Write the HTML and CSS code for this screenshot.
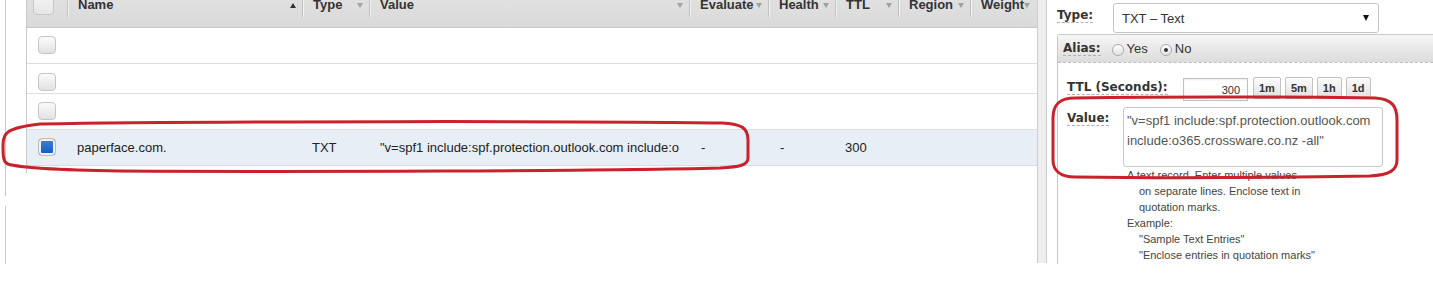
FILE: index.html
```html
<!DOCTYPE html>
<html lang="en">
  <head>
    <meta charset="UTF-8" />
    <title>Record Sets</title>
    <link rel="stylesheet" href="styles.css">
  </head>
  <body>
    <div class="page">
      <div class="gutter"><div class="gutter-line"></div></div>

      <div class="grid">
        <div class="grid-head">
          <div class="hcell hcell-check"><span class="cb cb-head"></span></div>
          <div class="hcell"><span class="label">Name</span><span class="sort-up"></span></div>
          <div class="hcell"><span class="label">Type</span><span class="sort-down"></span></div>
          <div class="hcell"><span class="label">Value</span><span class="sort-down"></span></div>
          <div class="hcell"><span class="label">Evaluate</span><span class="sort-down"></span></div>
          <div class="hcell"><span class="label">Health</span><span class="sort-down"></span></div>
          <div class="hcell"><span class="label">TTL</span><span class="sort-down"></span></div>
          <div class="hcell"><span class="label">Region</span><span class="sort-down"></span></div>
          <div class="hcell"><span class="label">Weight</span><span class="sort-down"></span></div>
        </div>

        <div class="row">
          <div class="cell c-check"><span class="cb"></span></div>
        </div>
        <div class="row short">
          <div class="cell c-check"><span class="cb"></span></div>
        </div>
        <div class="row">
          <div class="cell c-check"><span class="cb"></span></div>
        </div>
        <div class="row sel">
          <div class="cell c-check"><span class="cb on"></span></div>
          <div class="cell">paperface.com.</div>
          <div class="cell">TXT</div>
          <div class="cell c-value" title='"v=spf1 include:spf.protection.outlook.com include:o365.crossware.co.nz -all"'>"v=spf1 include:spf.protection.outlook.com include:o</div>
          <div class="cell c-dash">-</div>
          <div class="cell c-dash">-</div>
          <div class="cell">300</div>
          <div class="cell"></div>
          <div class="cell"></div>
        </div>
      </div>

      <div class="vscroll"></div>

      <div class="editor">
        <div class="type-row">
          <div class="lbl-col"><span class="lbl">Type:</span></div>
          <div class="select"><span>TXT &ndash; Text</span><span class="caret"></span></div>
        </div>

        <div class="rec-box">
          <div class="alias">
            <span class="lbl">Alias:</span>
            <span class="radio"></span><span>Yes</span>
            <span class="radio on"></span><span>No</span>
          </div>

          <div class="rec-body">
            <div class="ttl-row">
              <div class="lbl-col ttl-col"><span class="lbl">TTL (Seconds):</span></div>
              <div class="ttl-input">300</div>
              <button class="qbtn">1m</button>
              <button class="qbtn">5m</button>
              <button class="qbtn">1h</button>
              <button class="qbtn">1d</button>
            </div>

            <div class="value-row">
              <div class="lbl-col"><span class="lbl">Value:</span></div>
              <div class="txt">"v=spf1 include:spf.protection.outlook.com<br>include:o365.crossware.co.nz -all"</div>
            </div>

            <div class="hint">
              <p class="hang">A text record. Enter multiple values<br>on separate lines. Enclose text in<br>quotation marks.</p>
              <p>Example:</p>
              <p class="ex">"Sample Text Entries"<br>"Enclose entries in quotation marks"</p>
            </div>
          </div>
        </div>
      </div>

      <!-- hand drawn highlight rings -->
      <svg class="marks" width="1433" height="292" viewBox="0 0 1433 292">
        <path d="M 40 124 C 200 121, 600 121, 722 123 C 742 124, 748 128, 748 140 L 748 158 C 748 165, 740 167, 720 168 C 600 171, 300 172, 120 171 C 60 170, 20 168, 8 164 C 3 162, 3 156, 3 145 C 3 133, 6 128, 40 124 Z" />
        <path d="M 1075 98 C 1200 96, 1300 97, 1375 98 C 1392 99, 1397 106, 1397 120 L 1397 160 C 1397 170, 1390 175, 1370 176 C 1250 178, 1150 178, 1075 177 C 1060 177, 1053 170, 1053 160 L 1053 118 C 1053 104, 1060 98, 1075 98 Z" />
      </svg>
    </div>
  </body>
</html>
```

FILE: styles.css
```css
body {
  margin: 0;
  font-family: "Liberation Sans", Arial, sans-serif;
  color: #222;
  background: #fff;
}
.page {
  position: relative;
  display: flex;
  height: 264px;
  overflow: hidden;
}

/* left gutter */
.gutter {
  width: 26px;
  flex: none;
}
.gutter-line {
  margin-left: 5px;
  width: 1px;
  height: 264px;
  background: linear-gradient(#c8c8c8 0 196px, transparent 196px 206px, #c8c8c8 206px);
}

/* record grid */
.grid {
  width: 1010px;
  height: 173px;
  flex: none;
  border-left: 1px solid #c9c9c9;
}
.grid-head,
.row {
  display: grid;
  grid-template-columns: 41px 235px 67px 320px 79px 67px 63px 72px 66px;
}
.grid-head {
  height: 27px;
  background: linear-gradient(#e0e0e0, #dadada);
  border-bottom: 1px solid #c8c8c8;
}
.hcell {
  position: relative;
  display: flex;
  align-items: flex-start;
  padding: 0 7px 0 10px;
  font-size: 13px;
  font-weight: bold;
  line-height: 15px;
  color: #333;
}
.hcell::after {
  content: "";
  position: absolute;
  right: 0;
  top: 0;
  width: 1px;
  height: 17px;
  background: #c2c2c2;
  box-shadow: 1px 0 0 #f3f3f3;
}
.hcell:last-child::after {
  display: none;
}
.hcell-check {
  padding: 0;
}
.hcell .label {
  margin-top: -3px;
  white-space: nowrap;
}
.sort-up,
.sort-down {
  flex: none;
  margin: 3px 0 0 auto;
  width: 0;
  height: 0;
  border-left: 3.5px solid transparent;
  border-right: 3.5px solid transparent;
}
.sort-up {
  border-bottom: 5px solid #333;
}
.sort-down {
  border-top: 5px solid #a0a0a0;
}

.row {
  height: 36px;
  box-sizing: border-box;
  border-bottom: 1px solid #dedede;
  font-size: 13px;
  color: #222;
}
.row.short {
  height: 30px;
}
.row.sel {
  background: #e7eef6;
  border-bottom-color: #d6dce3;
}
.cell {
  padding-left: 9px;
  line-height: 35px;
  white-space: nowrap;
  overflow: hidden;
}
.c-value {
  padding-left: 10px;
  margin-right: 10px;
}
.c-dash {
  padding-left: 11px;
}
.cell.c-check {
  padding: 8px 0 0 11px;
  line-height: normal;
}
.row.short .c-check {
  padding-top: 9px;
}
.cb {
  display: block;
  width: 18px;
  height: 18px;
  box-sizing: border-box;
  border: 1px solid #c6c6c6;
  border-radius: 4px;
  background: linear-gradient(#fbfbfb, #e2e2e2);
}
.cb.on {
  border-color: #bcbcbc;
  background: linear-gradient(#3a86d8, #1459b3);
  box-shadow: inset 0 0 0 2px #eef1f4;
}
.cb-head {
  width: 21px;
  height: 20px;
  margin: -5px 0 0 6px;
  background: linear-gradient(#f4f4f4, #e6e6e6);
}

.vscroll {
  width: 8px;
  height: 263px;
  flex: none;
  background: #eeeeee;
  border-left: 1px solid #cdcdcd;
  border-right: 1px solid #cdcdcd;
}

/* record editor */
.editor {
  flex: 1;
  min-width: 0;
  padding-left: 10px;
}
.lbl-col {
  width: 56px;
  flex: none;
}
.lbl {
  display: inline-block;
  font-family: "DejaVu Sans", Verdana, sans-serif;
  font-size: 12px;
  font-weight: bold;
  line-height: 13px;
  color: #333;
  border-bottom: 1px dashed #b0b0b0;
}
.type-row {
  display: flex;
  height: 34px;
}
.type-row .lbl {
  margin-top: 9px;
}
.select {
  margin-top: 3px;
  width: 266px;
  height: 30px;
  box-sizing: border-box;
  display: flex;
  align-items: center;
  justify-content: space-between;
  padding: 0 9px 0 8px;
  border: 1px solid #c5c5c5;
  border-radius: 3px;
  font-size: 13px;
  color: #333;
}
.caret {
  width: 0;
  height: 0;
  border-left: 3.5px solid transparent;
  border-right: 3.5px solid transparent;
  border-top: 6px solid #111;
}

.rec-box {
  height: 229px;
  border: 1px solid #c8c8c8;
  border-right: 0;
  border-bottom: 0;
  border-radius: 3px 0 0 0;
}
.alias {
  display: flex;
  align-items: center;
  height: 27px;
  padding-left: 5px;
  background: linear-gradient(#f6f6f6, #dcdcdc);
  border-bottom: 1px dashed #bdbdbd;
  font-size: 13px;
  color: #333;
}
.radio {
  position: relative;
  width: 12px;
  height: 12px;
  box-sizing: border-box;
  margin: 2px 3px 0 11px;
  border: 1px solid #a9a9a9;
  border-radius: 50%;
  background: linear-gradient(#fdfdfd, #e3e3e3);
}
.radio.on {
  margin-left: 12px;
}
.radio.on::after {
  content: "";
  position: absolute;
  left: 3px;
  top: 3px;
  width: 4px;
  height: 4px;
  border-radius: 50%;
  background: #333;
}

.rec-body {
  padding: 14px 0 0 9px;
}
.ttl-row {
  display: flex;
  align-items: flex-start;
  height: 23px;
}
.ttl-col {
  width: 116px;
}
.ttl-row .lbl {
  margin-top: 2px;
}
.ttl-input {
  width: 65px;
  height: 23px;
  box-sizing: border-box;
  margin-top: 1px;
  padding: 2px 7px 0 0;
  border: 1px solid #c0c0c0;
  box-shadow: inset 0 1px 2px rgba(0, 0, 0, 0.08);
  text-align: right;
  font-size: 11px;
  line-height: 18px;
  color: #333;
}
.qbtn {
  margin: 0 0 0 4px;
  height: 22px;
  box-sizing: border-box;
  padding: 0 5px;
  border: 1px solid #c2c2c2;
  border-radius: 2px;
  background: linear-gradient(#fcfcfc, #e0e0e0);
  font-family: "Liberation Sans", Arial, sans-serif;
  font-size: 11px;
  font-weight: bold;
  line-height: 18px;
  color: #333;
}
.ttl-input + .qbtn {
  margin-left: 5px;
}

.value-row {
  display: flex;
  margin-top: 7px;
}
.value-row .lbl {
  margin-top: 5px;
}
.txt {
  width: 260px;
  height: 60px;
  box-sizing: border-box;
  padding: 3px 4px 0 3px;
  border: 1px solid #c8c8c8;
  border-radius: 3px;
  font-size: 13px;
  line-height: 20px;
  color: #555;
  white-space: nowrap;
  overflow: hidden;
}

.hint {
  margin-left: 60px;
  font-size: 11px;
  line-height: 16px;
  color: #444;
}
.hint p {
  margin: 0;
}
.hint .hang {
  padding-left: 12px;
  text-indent: -12px;
}
.hint .ex {
  padding-left: 12px;
}

.marks {
  position: absolute;
  left: 0;
  top: 0;
  pointer-events: none;
}
.marks path {
  fill: none;
  stroke: #c8232c;
  stroke-width: 3;
}
```
